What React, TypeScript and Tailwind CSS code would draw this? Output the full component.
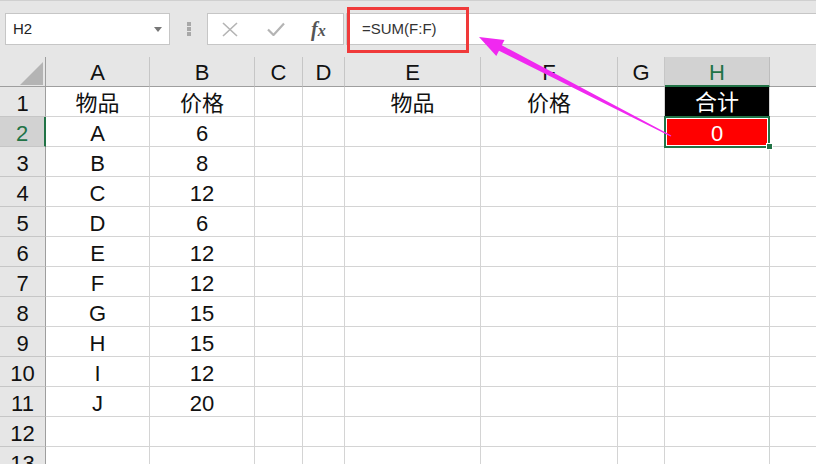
import React from 'react';

const COLS = ['A', 'B', 'C', 'D', 'E', 'F', 'G', 'H'];

// cell contents keyed by column letter + row number
const DATA: Record<string, string> = {
  A1: '物品',
  B1: '价格',
  E1: '物品',
  F1: '价格',
  H1: '合计',
  H2: '0',
};
const items = ['A', 'B', 'C', 'D', 'E', 'F', 'G', 'H', 'I', 'J'];
const prices = ['6', '8', '12', '6', '12', '12', '15', '15', '12', '20'];
items.forEach((v, i) => {
  DATA[`A${i + 2}`] = v;
  DATA[`B${i + 2}`] = prices[i];
});

const ROWS = Array.from({ length: 13 }, (_, i) => i + 1);

const font = "font-['Liberation_Sans','Noto_Sans_CJK_SC',sans-serif]";

function Cell({ col, row }: { col: string; row: number }) {
  const key = `${col}${row}`;
  const value = DATA[key];

  if (key === 'H1') {
    return (
      <div className="h-[30px] pt-[2px] border-r border-b border-[#d4d4d4] bg-black text-white flex items-center justify-center">
        {value}
      </div>
    );
  }

  if (key === 'H2') {
    return (
      <div className="relative h-[30px] border-r border-b border-[#d4d4d4]">
        <div className="absolute -left-px -top-px w-[106px] h-[32px] border-2 border-[#217346] bg-white p-px">
          <div className="w-full h-full pt-[2px] bg-[#ff0000] text-white flex items-center justify-center">{value}</div>
        </div>
        <div className="absolute -right-[4px] -bottom-[4px] w-[7px] h-[7px] bg-[#217346] border border-white" />
      </div>
    );
  }

  return (
    <div className="h-[30px] pt-[3px] border-r border-b border-[#d4d4d4] flex items-center justify-center text-[#111]">
      {value}
    </div>
  );
}

function FormulaBar() {
  return (
    <div className="h-[57px] bg-[#e6e6e6] border-t border-[#d0d0d0] flex items-start pt-[12px]">
      {/* Name box */}
      <div className="ml-[5px] w-[165px] h-[32px] bg-white border border-[#c6c6c6] flex items-center justify-between pl-[7px] pr-[7px]">
        <span className="text-[15px] text-[#222]">H2</span>
        <svg width="8" height="5" viewBox="0 0 8 5">
          <polygon points="0,0 8,0 4,5" fill="#777" />
        </svg>
      </div>

      {/* Grip dots */}
      <div className="ml-[17px] mt-[9px] flex flex-col gap-[1px]">
        <div className="w-[4px] h-[4px] bg-[#a8a8a8]" />
        <div className="w-[4px] h-[4px] bg-[#a8a8a8]" />
        <div className="w-[4px] h-[4px] bg-[#a8a8a8]" />
      </div>

      {/* Cancel / enter / fx */}
      <div className="ml-[16px] w-[137px] h-[32px] bg-white border border-[#c6c6c6] flex items-center">
        <svg className="ml-[14px]" width="16" height="15" viewBox="0 0 16 15">
          <path d="M1 1 L15 14 M15 1 L1 14" stroke="#b4b4b4" strokeWidth="1.6" fill="none" />
        </svg>
        <svg className="ml-[29px]" width="18" height="14" viewBox="0 0 18 14">
          <path d="M1 7.5 L6.5 13 L17 1.5" stroke="#b4b4b4" strokeWidth="2.2" fill="none" />
        </svg>
        <span className="ml-[26px] text-[20px] italic font-bold text-[#555] font-['Liberation_Serif',serif] leading-none">
          f<span className="text-[16px]">x</span>
        </span>
      </div>

      {/* Formula input */}
      <div className="ml-[2px] flex-1 h-[32px] bg-white border-y border-l border-[#c6c6c6] flex items-center pl-[15px]">
        <span className="text-[15px] text-[#333]">=SUM(F:F)</span>
      </div>
    </div>
  );
}

function Sheet() {
  return (
    <div className="grid grid-cols-[46px_104px_105px_48px_42px_136px_137px_47px_105px_1fr] text-[22px]">
      {/* header row */}
      <div className="relative h-[30px] bg-[#e6e6e6] border-r border-b border-[#9e9e9e]">
        <svg className="absolute left-[20px] top-[5px]" width="24" height="24" viewBox="0 0 24 24">
          <polygon points="23,0 23,23 0,23" fill="#b4b4b4" />
        </svg>
      </div>
      {COLS.map((c) =>
        c === 'H' ? (
          <div
            key={c}
            className="h-[30px] pt-[2px] bg-[#d2d2d2] border-r border-[#bdbdbd] border-b-2 border-b-[#217346] flex items-center justify-center text-[#217346]"
          >
            {c}
          </div>
        ) : (
          <div
            key={c}
            className="h-[30px] pt-[2px] bg-[#e6e6e6] border-r border-[#c6c6c6] border-b border-b-[#9e9e9e] flex items-center justify-center text-[#111]"
          >
            {c}
          </div>
        )
      )}
      <div className="h-[30px] bg-[#e6e6e6] border-b border-[#9e9e9e]" />

      {/* data rows */}
      {ROWS.map((r) => (
        <React.Fragment key={r}>
          {r === 2 ? (
            <div className="h-[30px] pt-[3px] bg-[#d2d2d2] border-b border-[#c6c6c6] border-r-2 border-r-[#217346] flex items-center justify-center text-[#217346]">
              {r}
            </div>
          ) : (
            <div className="h-[30px] pt-[3px] bg-[#e6e6e6] border-b border-[#c6c6c6] border-r border-r-[#9e9e9e] flex items-center justify-center text-[#111]">
              {r}
            </div>
          )}
          {COLS.map((c) => (
            <Cell key={c} col={c} row={r} />
          ))}
          <div className="h-[30px] border-b border-[#d4d4d4]" />
        </React.Fragment>
      ))}
    </div>
  );
}

export default function App() {
  return (
    <div className={`relative w-[816px] h-[464px] overflow-hidden bg-white ${font}`}>
      <FormulaBar />
      <Sheet />

      {/* annotation: red box around formula */}
      <div className="absolute left-[347px] top-[7px] w-[122px] h-[46px] border-[3px] border-[#f03a3a]" />

      {/* annotation: magenta arrow */}
      <svg className="absolute left-0 top-0 pointer-events-none" width="816" height="464" viewBox="0 0 816 464">
        <polygon
          points="479,37 504.5,40 501.8,45.3 671.3,135.6 670.7,136.4 499,50.7 496.3,56"
          fill="#f028f0"
        />
      </svg>
    </div>
  );
}
